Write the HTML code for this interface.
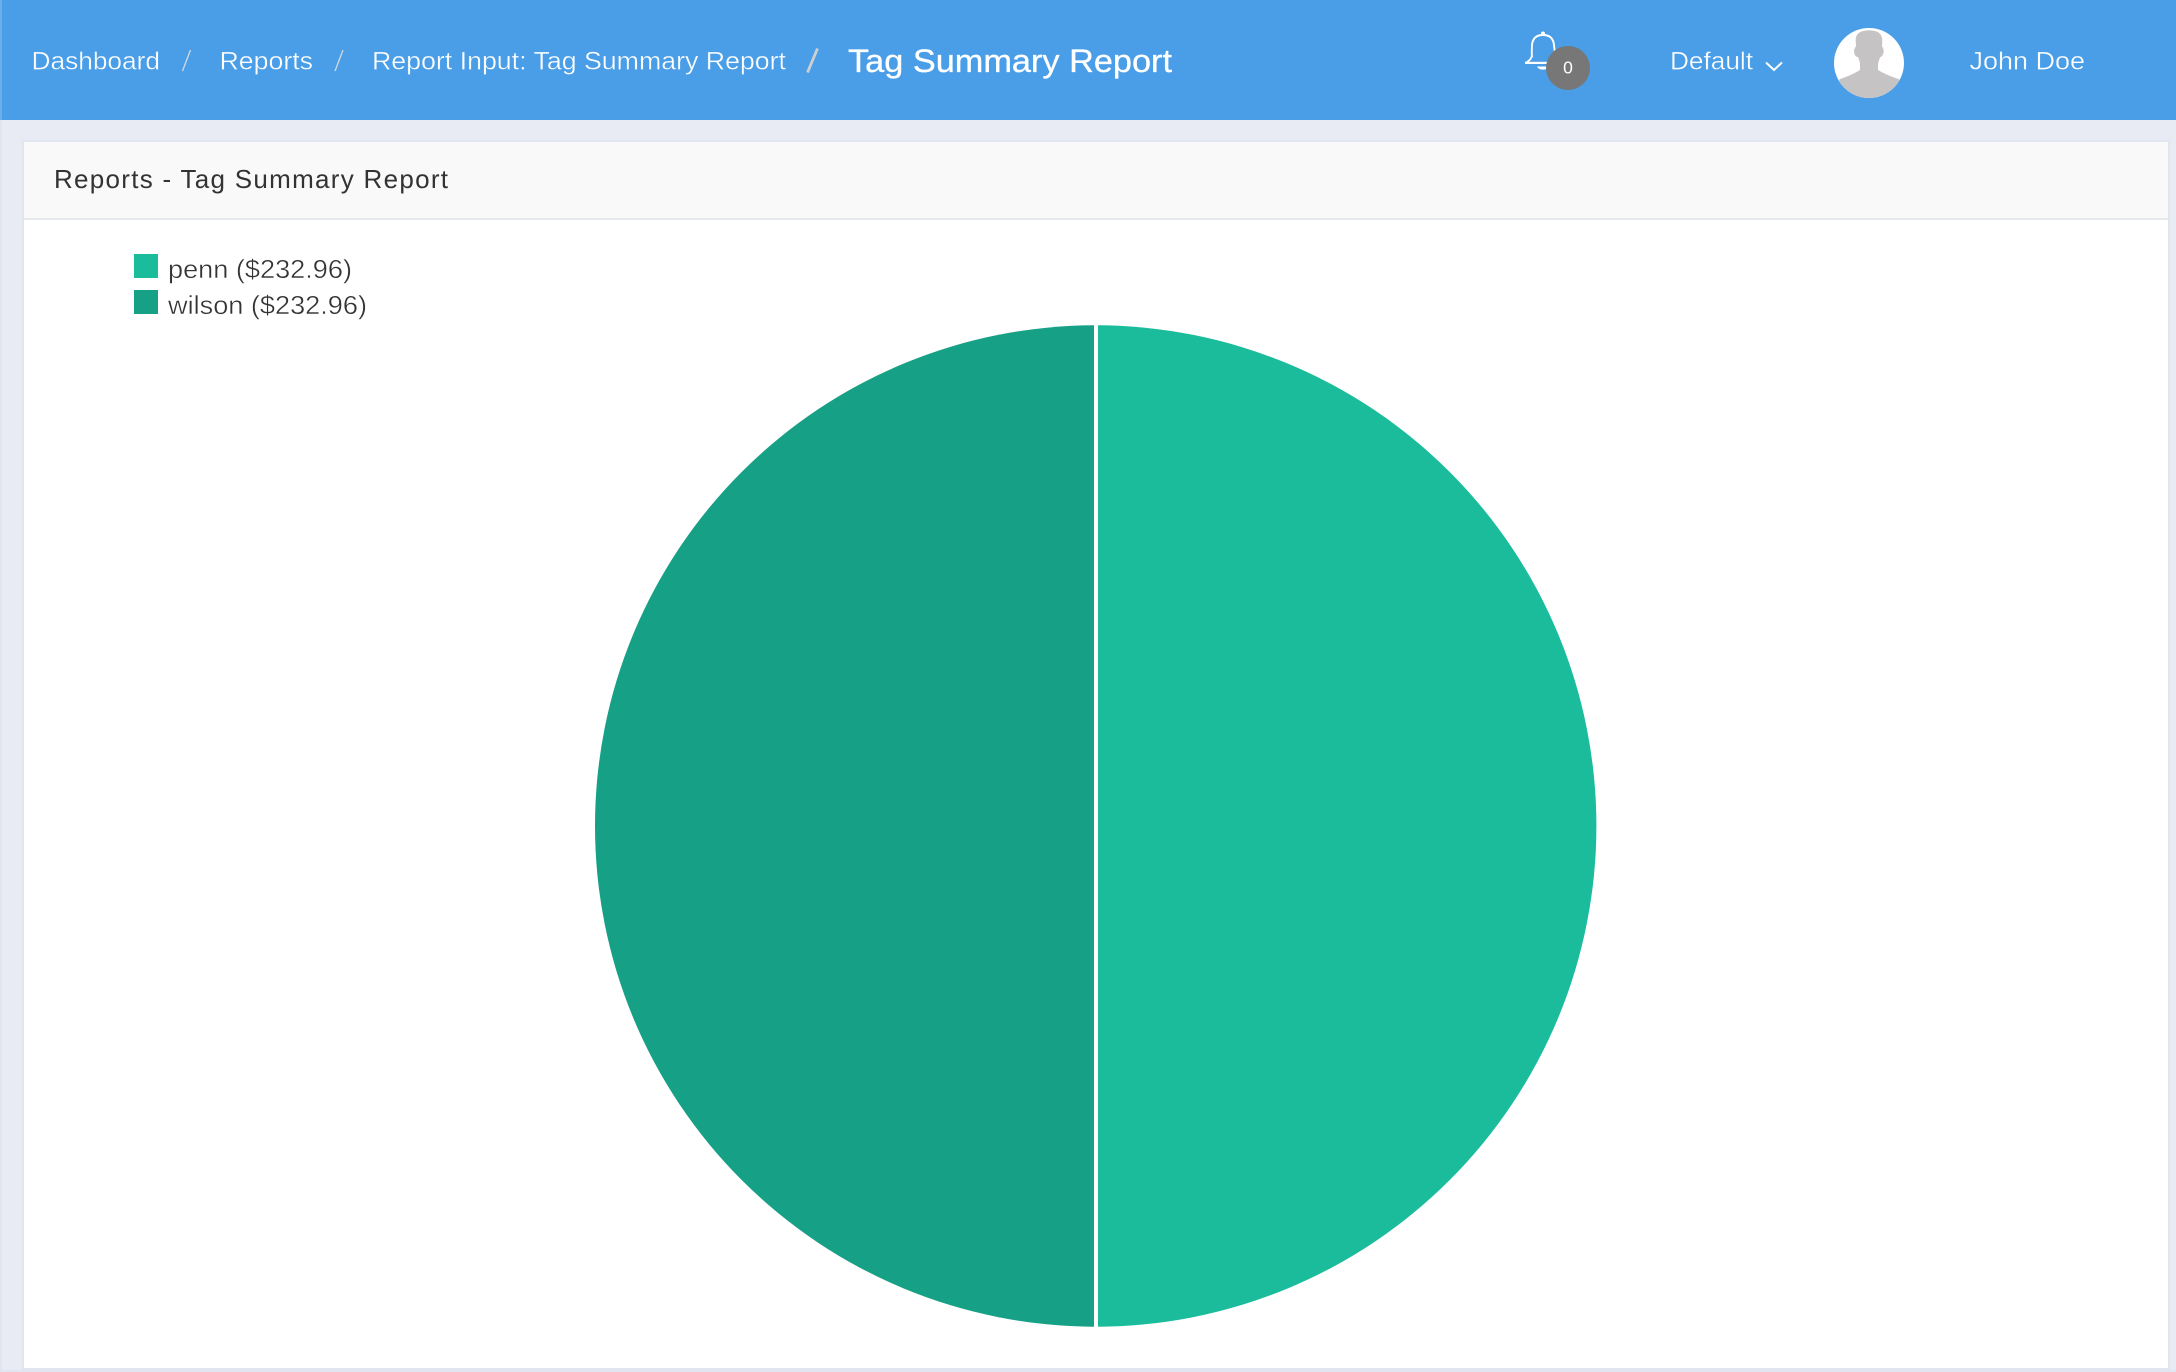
<!DOCTYPE html>
<html lang="en">
<head>
<meta charset="utf-8">
<title>Tag Summary Report</title>
<style>
html,body{margin:0;padding:0;width:2176px;height:1372px;overflow:hidden;background:#E8EBF4}
svg{display:block;position:absolute;left:0;top:0}
text{font-family:"Liberation Sans",Arial,sans-serif}
</style>
</head>
<body>
<svg width="2176" height="1372" viewBox="0 0 2176 1372" xmlns="http://www.w3.org/2000/svg">
  <defs>
    <clipPath id="av"><circle cx="147" cy="144" r="105"/></clipPath>
    <clipPath id="pl"><rect x="500" y="300" width="594" height="1050"/></clipPath>
    <clipPath id="pr"><rect x="1098" y="300" width="600" height="1050"/></clipPath>
  </defs>
  <!-- page -->
  <rect width="2176" height="1372" fill="#E8EBF4"/>
  <rect x="0" y="120" width="2" height="1252" fill="#E1E5EF"/>
  <rect x="0" y="1370" width="2176" height="2" fill="#E1E5EF"/>
  <!-- header -->
  <rect width="2176" height="120" fill="#4A9EE8"/>
  <rect x="0" y="0" width="2" height="120" fill="#6AAEEA"/>
  <g fill="#fff" font-size="25" stroke="#4A9EE8" stroke-width=".35">
    <text x="31.500" y="69.500" textLength="128.500" lengthAdjust="spacingAndGlyphs">Dashboard</text>
    <text x="219.500" y="69.500" textLength="93.500" lengthAdjust="spacingAndGlyphs">Reports</text>
    <text x="372" y="69.500" textLength="414" lengthAdjust="spacingAndGlyphs">Report Input: Tag Summary Report</text>
    <text x="1670" y="69.500" textLength="83" lengthAdjust="spacingAndGlyphs">Default</text>
    <text x="1969.500" y="69.500" textLength="115.500" lengthAdjust="spacingAndGlyphs">John Doe</text>
  </g>
  <path d="M182.500 71 L190.500 50 M335 71 L343 50" stroke="#D6D8DA" stroke-width="1.300" fill="none"/>
  <path d="M807.500 72.500 L817.500 48.500" stroke="#CFCFCF" stroke-width="2.800" fill="none"/>
  <text x="848" y="72" font-size="32" fill="#fff" stroke="#fff" stroke-width=".3" textLength="324" lengthAdjust="spacingAndGlyphs">Tag Summary Report</text>

  <!-- bell -->
  <path d="M1532 57 C1531.600 53 1531.700 50 1532 45 C1532.700 37.500 1537 35 1543 35 C1549 35 1553.300 37.500 1554 45 C1554.500 52 1556 58.500 1560.500 62.800" fill="none" stroke="#fff" stroke-width="1.900"/>
  <path d="M1532 56 C1531 59 1528.500 61.500 1525.500 62.800" fill="none" stroke="#fff" stroke-width="1.900"/>
  <rect x="1525" y="61.800" width="36" height="2.200" fill="#fff"/>
  <circle cx="1543" cy="33.500" r="2" fill="#fff"/>
  <path d="M1537 66.500 H1549 C1548 68.800 1545.500 69.600 1543 69.600 C1540.500 69.600 1538 68.800 1537 66.500 Z" fill="#fff"/>
  <circle cx="1568" cy="68" r="22" fill="#777777"/>
  <text x="1568" y="73.500" font-size="17.500" fill="#fff" text-anchor="middle">0</text>

  <!-- chevron -->
  <path d="M1766 62.500 L1774 70 L1782 62.500" fill="none" stroke="#fff" stroke-width="2"/>

  <!-- avatar -->
  <g transform="translate(1820 15) scale(.33333)">
    <circle cx="147" cy="144" r="105" fill="#fff"/>
    <path clip-path="url(#av)" fill="#C5C3C4" d="M147 46 C122 46 108 55 107 74 L108 95 C102 98 100 115 106 122 C110 126 112 126 115 127 C117 135 120 142 120 148 L120 165 C100 178 80 185 58 193 L58 260 L238 260 L238 193 C215 185 195 178 174 165 L174 148 C174 142 178 135 180 127 C185 126 190 120 191 110 C191 100 188 96 186 95 L187 74 C186 55 172 46 147 46 Z"/>
  </g>

  <!-- card -->
  <rect x="22" y="140" width="2148" height="1230" fill="#E1E5EF"/>
  <rect x="24" y="142" width="2144" height="1226" fill="#fff"/>
  <rect x="24" y="142" width="2144" height="76" fill="#F9F9F9"/>
  <rect x="24" y="218" width="2144" height="2" fill="#E7EAEE"/>
  <text x="54" y="188" font-size="26" fill="#333" textLength="394" lengthAdjust="spacing">Reports - Tag Summary Report</text>

  <!-- legend -->
  <rect x="134" y="254" width="24" height="24" fill="#1ABC9C"/>
  <rect x="134" y="290" width="24" height="24" fill="#16A085"/>
  <g font-size="26" fill="#333" stroke="#fff" stroke-width=".4">
    <text x="168" y="278" textLength="184" lengthAdjust="spacingAndGlyphs">penn ($232.96)</text>
    <text x="168" y="314" textLength="199" lengthAdjust="spacingAndGlyphs">wilson ($232.96)</text>
  </g>

  <!-- pie -->
  <circle cx="1095.700" cy="826" r="500.700" fill="#1ABC9C" clip-path="url(#pr)"/>
  <circle cx="1095.700" cy="826" r="500.700" fill="#16A085" clip-path="url(#pl)"/>
</svg>
</body>
</html>
